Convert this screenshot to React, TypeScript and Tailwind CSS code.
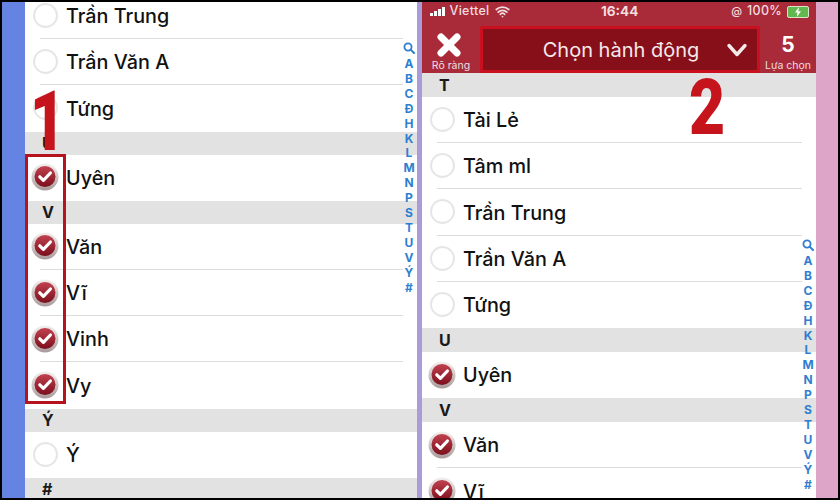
import { Wifi } from "lucide-react";

const FONT = "font-['Inter','Noto_Sans',sans-serif]";
const INDEX = ["A", "B", "C", "Đ", "H", "K", "L", "M", "N", "P", "S", "T", "U", "V", "Ý", "#"];

type Item =
  | { kind: "section"; label: string }
  | { kind: "row"; name: string; checked?: boolean; last?: boolean };

const leftItems: Item[] = [
  { kind: "row", name: "Trần Trung" },
  { kind: "row", name: "Trần Văn A" },
  { kind: "row", name: "Tứng", last: true },
  { kind: "section", label: "U" },
  { kind: "row", name: "Uyên", checked: true, last: true },
  { kind: "section", label: "V" },
  { kind: "row", name: "Văn", checked: true },
  { kind: "row", name: "Vĩ", checked: true },
  { kind: "row", name: "Vinh", checked: true },
  { kind: "row", name: "Vy", checked: true, last: true },
  { kind: "section", label: "Ý" },
  { kind: "row", name: "Ý", last: true },
  { kind: "section", label: "#" },
];

const rightItems: Item[] = [
  { kind: "section", label: "T" },
  { kind: "row", name: "Tài Lẻ" },
  { kind: "row", name: "Tâm ml" },
  { kind: "row", name: "Trần Trung" },
  { kind: "row", name: "Trần Văn A" },
  { kind: "row", name: "Tứng", last: true },
  { kind: "section", label: "U" },
  { kind: "row", name: "Uyên", checked: true, last: true },
  { kind: "section", label: "V" },
  { kind: "row", name: "Văn", checked: true },
  { kind: "row", name: "Vĩ", checked: true },
];

const CheckedMark = () => (
  <svg width="28" height="28" viewBox="0 0 28 28" className="shrink-0">
    <defs>
      <linearGradient id="ring" x1="0" y1="0" x2="0" y2="1">
        <stop offset="0" stopColor="#f4f0f0" />
        <stop offset="1" stopColor="#a89a9a" />
      </linearGradient>
      <linearGradient id="fill" x1="0" y1="0" x2="0" y2="1">
        <stop offset="0" stopColor="#c2414f" />
        <stop offset="1" stopColor="#7c0f1c" />
      </linearGradient>
    </defs>
    <circle cx="14" cy="14" r="13.5" fill="url(#ring)" />
    <circle cx="14" cy="13.5" r="10.5" fill="url(#fill)" />
    <path d="M8.8 13.8l3.6 3.6 7-7.4" fill="none" stroke="#fff" strokeWidth="3.2" strokeLinecap="round" strokeLinejoin="round" />
  </svg>
);

const Row = ({ name, checked, last }: { name: string; checked?: boolean; last?: boolean }) => (
  <div className="flex h-[46.2px] flex-col">
    <div className="flex flex-1 items-center">
      <div className="flex w-[40px] shrink-0 items-center justify-center">
        {checked ? (
          <CheckedMark />
        ) : (
          <div className="h-[25px] w-[25px] rounded-full border-2 border-[#e6e6e6] bg-white" />
        )}
      </div>
      <span className="ml-[1px] pt-[3px] text-[19.8px] leading-none font-medium text-[#111]">{name}</span>
    </div>
    <div className={`ml-[15px] mr-[14px] h-px ${last ? "" : "bg-[#dcdcdc]"}`} />
  </div>
);

const List = ({ items, sectionHeight }: { items: Item[]; sectionHeight: string }) => (
  <div>
    {items.map((item, i) =>
      item.kind === "section" ? (
        <div key={i} className={`flex items-center bg-[#e2e2e2] pl-[17px] text-[16px] font-bold text-[#1a1a1a] ${sectionHeight}`}>
          {item.label}
        </div>
      ) : (
        <Row key={i} name={item.name} checked={item.checked} last={item.last} />
      ),
    )}
  </div>
);

const SideIndex = ({ className }: { className: string }) => (
  <div className={`absolute flex w-[16px] flex-col items-center text-[12px] leading-[14.9px] font-bold text-[#2f7fd0] ${className}`}>
    <svg width="12" height="12" viewBox="0 0 12 12" className="mb-[3px]">
      <circle cx="5" cy="5" r="3.6" fill="none" stroke="#2f7fd0" strokeWidth="1.8" />
      <path d="M7.6 7.6L11 11" stroke="#2f7fd0" strokeWidth="2" strokeLinecap="round" />
    </svg>
    {INDEX.map((l) => (
      <span key={l}>{l}</span>
    ))}
  </div>
);

const StatusBar = () => (
  <div className="relative flex h-[24px] items-center justify-between pb-[5px] pl-[8px] pr-[7px] text-[12.5px] font-medium text-[#f1dcdf]">
    <div className="flex items-center gap-[5px]">
      <div className="flex items-end gap-[1.5px]">
        <div className="h-[3px] w-[2.5px] bg-white" />
        <div className="h-[5px] w-[2.5px] bg-white" />
        <div className="h-[7px] w-[2.5px] bg-white" />
        <div className="h-[9px] w-[2.5px] bg-white" />
      </div>
      <span className="tracking-[0.3px]">Viettel</span>
      <Wifi size={15} strokeWidth={2.8} />
    </div>
    <span className="absolute left-[179px] text-[13.5px] font-bold">16:44</span>
    <div className="flex items-center gap-[5px]">
      <span className="text-[11px]">@</span>
      <span className="tracking-[0.3px]">100%</span>
      <div className="flex h-[12px] w-[22px] items-center justify-center rounded-[2px] border border-[#d9e6c9] bg-[#62b84f]">
        <svg width="8" height="10" viewBox="0 0 8 10">
          <path d="M5 0L1 5.6h2.4L2.8 10 7 4.2H4.4z" fill="#fff" />
        </svg>
      </div>
    </div>
  </div>
);

const Header = () => (
  <div className="flex h-[47px] items-stretch">
    <div className="flex w-[58px] shrink-0 flex-col items-center justify-end pb-[1px] text-[#eedfe1]">
      <svg width="26" height="26" viewBox="0 0 26 26" className="-ml-[5px] mb-[1px]">
        <path d="M5 5L21 21M21 5L5 21" stroke="#fff" strokeWidth="7" strokeLinecap="round" />
      </svg>
      <span className="text-[10.5px] leading-[13px]">Rõ ràng</span>
    </div>
    <div className="flex w-[280px] shrink-0 items-center rounded-[2px] border-[3px] border-[#c8101e] bg-[#870f19]">
      <span className="flex-1 pl-[33px] text-center text-[20px] text-[#f5e9ea]">Chọn hành động</span>
      <svg width="22" height="16" viewBox="0 0 22 16" className="mr-[9px]">
        <path d="M3 3.5L11 12.5L19 3.5" fill="none" stroke="#f5eaea" strokeWidth="3.4" strokeLinecap="round" strokeLinejoin="round" />
      </svg>
    </div>
    <div className="flex flex-1 flex-col items-center justify-end pb-[1px] text-[#eedfe1]">
      <span className="text-[21px] leading-[28px] font-bold text-white">5</span>
      <span className="text-[10.5px] leading-[13px]">Lựa chọn</span>
    </div>
  </div>
);

const Annotation = ({ className, children }: { className: string; children: string }) => (
  <span className={`absolute font-['Roboto',sans-serif] font-black leading-none text-[#c5141c] ${className}`}>
    {children}
  </span>
);

export default function App() {
  return (
    <div className={`flex h-[500px] w-[840px] overflow-hidden bg-black p-[2px] ${FONT}`}>
      <div className="relative flex h-full flex-1 overflow-hidden">
        <div className="w-[23px] shrink-0 bg-[#6483e2]" />
        <div className="relative w-[392px] shrink-0 overflow-hidden bg-white">
          <div className="-mt-[9px]">
            <List items={leftItems} sectionHeight="h-[23px]" />
          </div>
          <SideIndex className="left-[376px] top-[40px]" />
          <div className="absolute left-0 top-[152px] h-[250px] w-[41px] border-[3px] border-[#b5141f]" />
          <Annotation className="left-[5px] top-[78px] origin-left scale-x-[0.72] text-[84px]">1</Annotation>
        </div>
        <div className="w-[5px] shrink-0 bg-[#a99cd8]" />
        <div className="relative w-[394px] shrink-0 overflow-hidden bg-white">
          <div className="bg-[#a92a38]">
            <StatusBar />
            <Header />
          </div>
          <List items={rightItems} sectionHeight="h-[24px]" />
          <SideIndex className="left-[378px] top-[237px]" />
          <Annotation className="left-[267px] top-[67px] origin-left scale-x-[0.8] text-[78px]">2</Annotation>
        </div>
        <div className="flex-1 bg-[#dda6c8]" />
      </div>
    </div>
  );
}
